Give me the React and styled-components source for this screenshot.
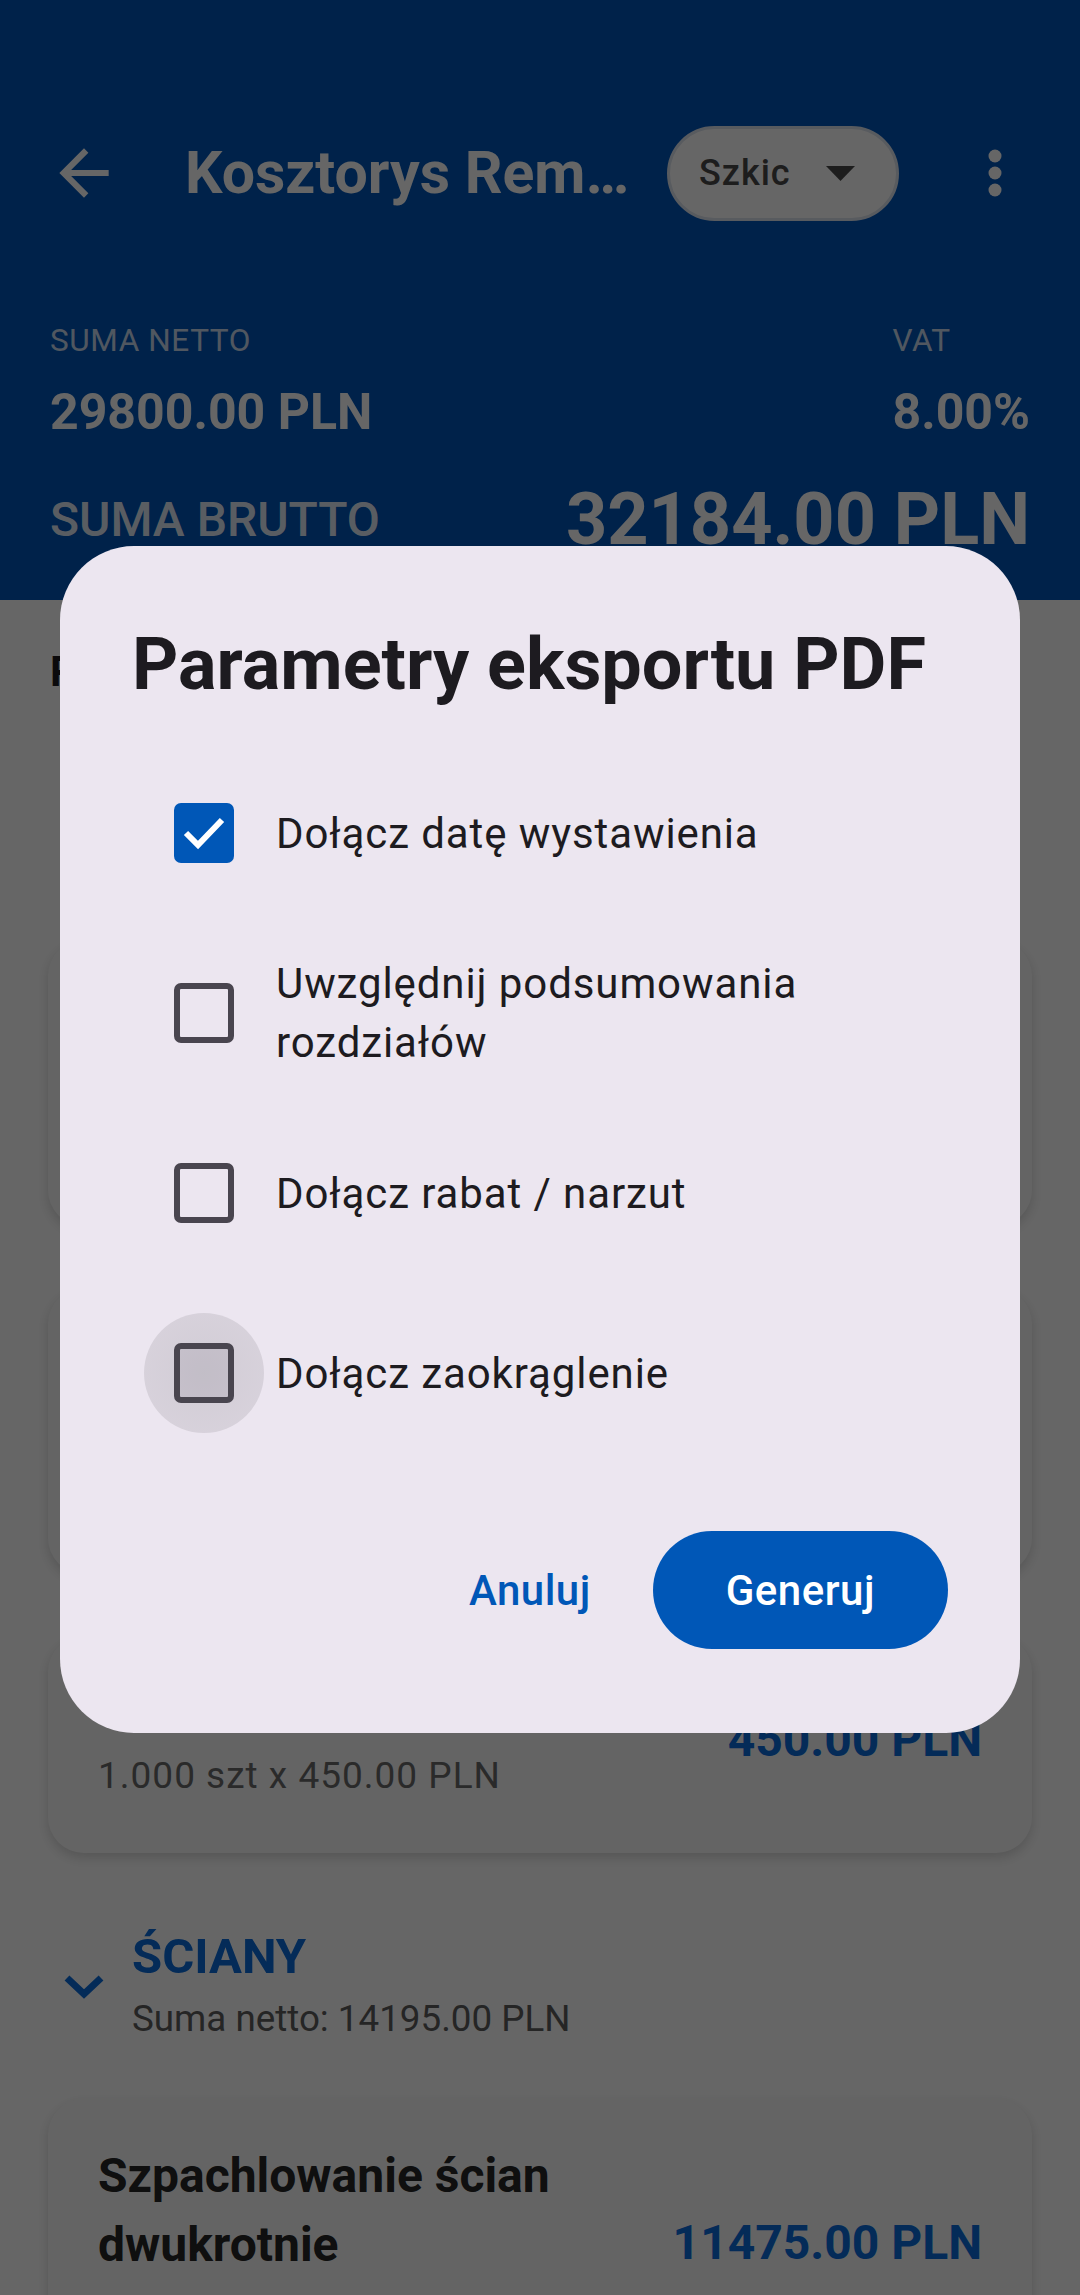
import React from "react";
import styled, { createGlobalStyle } from "styled-components";

const GlobalStyle = createGlobalStyle`
  html, body {
    margin: 0;
    padding: 0;
    background: #ffffff;
  }
  * {
    box-sizing: border-box;
  }
  body {
    font-family: Roboto, "Liberation Sans", Arial, sans-serif;
    -webkit-font-smoothing: antialiased;
  }
`;

const Screen = styled.div`
  position: relative;
  width: 1080px;
  height: 2295px;
  overflow: hidden;
  background: #ffffff;
`;

/* ---------- header ---------- */

const Header = styled.header`
  background: #0055b9;
  color: #ffffff;
  padding: 110px 0 37px;
`;

const Toolbar = styled.div`
  display: flex;
  align-items: center;
  height: 126px;
  padding: 0 78px 0 47px;
`;

const IconSlot = styled.div`
  display: flex;
  align-items: center;
  justify-content: center;
  flex-shrink: 0;
  width: ${(p) => p.$w}px;
  margin-left: ${(p) => p.$ml || 0}px;
`;

const Title = styled.h1`
  flex: 1;
  min-width: 0;
  margin: 0 0 0 64px;
  font-size: 59px;
  line-height: 70px;
  font-weight: 700;
  white-space: nowrap;
  overflow: hidden;
  text-overflow: ellipsis;
`;

const StatusChip = styled.button`
  display: flex;
  align-items: center;
  gap: 35px;
  width: 232px;
  height: 95px;
  margin-left: 37px;
  padding: 0 0 0 29px;
  border: 3px solid #dce3ee;
  border-radius: 48px;
  background: #ffffff;
  color: #4a4a4a;
  font-family: inherit;
  font-size: 36px;
  font-weight: 500;
  letter-spacing: 1px;
`;

const Summary = styled.div`
  display: flex;
  flex-direction: column;
  margin-top: 84px;
  padding: 0 50px;
`;

const SummaryRow = styled.div`
  display: flex;
  justify-content: space-between;
  align-items: ${(p) => p.$align || "flex-start"};
  margin-top: ${(p) => p.$mt || 0}px;
`;

const Stat = styled.div`
  display: flex;
  flex-direction: column;
  gap: 21px;
`;

const StatLabel = styled.span`
  font-size: 31.5px;
  line-height: 42px;
  color: rgba(255, 255, 255, 0.8);
  letter-spacing: 0.6px;
`;

const StatValue = styled.span`
  font-size: 50px;
  line-height: 58px;
  font-weight: 700;
`;

const GrossLabel = styled.span`
  font-size: 48px;
  line-height: 56px;
  font-weight: 500;
  color: rgba(255, 255, 255, 0.9);
`;

const GrossValue = styled.span`
  font-size: 72px;
  line-height: 86px;
  font-weight: 700;
`;

/* ---------- list under the header ---------- */

const Body = styled.main`
  padding: 0 48px;
  color: #1d1b20;
`;

const SectionTitle = styled.h2`
  margin: 44px 0 0;
  font-size: 42px;
  line-height: 56px;
  font-weight: 700;
  padding-left: 2px;
`;

const AddButton = styled.button`
  display: block;
  height: 120px;
  margin: 60px auto;
  padding: 0 60px;
  border: none;
  border-radius: 60px;
  background: #d8e2ff;
  color: #0a6cdc;
  font-family: inherit;
  font-size: 40px;
  font-weight: 500;
`;

const ItemList = styled.div`
  display: flex;
  flex-direction: column;
  gap: 62px;
`;

const ItemCard = styled.div`
  display: flex;
  align-items: center;
  gap: 24px;
  padding: ${(p) => p.$pt ?? 42}px 50px ${(p) => p.$pb ?? 42}px;
  background: #fbfbfb;
  border-radius: 36px;
  box-shadow: 0 5px 12px rgba(0, 0, 0, 0.16);
`;

const ItemInfo = styled.div`
  flex: 1;
  min-width: 0;
  display: flex;
  flex-direction: column;
  gap: 4px;
`;

const ItemName = styled.span`
  font-size: 48px;
  line-height: 69px;
  font-weight: 700;
  color: #262626;
`;

const ItemDetail = styled.span`
  font-size: 37px;
  line-height: 60px;
  letter-spacing: 1px;
  color: #6a6a6a;
`;

const ItemPrice = styled.span`
  flex-shrink: 0;
  font-size: 48px;
  font-weight: 700;
  color: #0a6cdc;
`;

const Chapter = styled.div`
  display: flex;
  align-items: center;
  gap: 17px;
  margin-top: 42px;
  padding: 34px 0 55px 4px;
`;

const ChapterText = styled.div`
  display: flex;
  flex-direction: column;
  gap: 9px;
`;

const ChapterName = styled.span`
  font-size: 49px;
  line-height: 56px;
  font-weight: 700;
  color: #0a6cdc;
`;

const ChapterSum = styled.span`
  font-size: 36.75px;
  line-height: 50px;
  color: #5e5e5e;
`;

/* ---------- export dialog ---------- */

const Scrim = styled.div`
  position: fixed;
  inset: 0;
  display: flex;
  justify-content: center;
  align-items: flex-start;
  padding-top: 546px;
  background: rgba(0, 0, 0, 0.6);
`;

const Dialog = styled.div`
  width: 960px;
  padding: 76px 72px 84px;
  background: #ece6f0;
  border-radius: 74px;
  color: #1d1b20;
`;

const DialogTitle = styled.h2`
  margin: 0;
  font-size: 72px;
  line-height: 86px;
  font-weight: 700;
`;

const Options = styled.div`
  display: flex;
  flex-direction: column;
  gap: 60px;
  margin-top: 65px;
  padding-left: 12px;
`;

const OptionRow = styled.label`
  display: flex;
  align-items: center;
  min-height: 120px;
`;

const Target = styled.span`
  display: flex;
  align-items: center;
  justify-content: center;
  flex-shrink: 0;
  width: 120px;
  height: 120px;
  border-radius: 50%;
  background: ${(p) =>
    p.$focused
      ? "radial-gradient(circle, rgba(29,27,32,0.13) 0%, rgba(29,27,32,0.1) 70%, rgba(29,27,32,0.06) 100%)"
      : "transparent"};
`;

const Box = styled.span`
  display: flex;
  align-items: center;
  justify-content: center;
  width: 60px;
  height: 60px;
  border-radius: 7px;
  border: ${(p) => (p.$checked ? "none" : "6px solid #49454f")};
  background: ${(p) =>
    p.$checked ? "#0057b7" : p.$focused ? "rgba(29,27,32,0.08)" : "transparent"};
`;

const OptionLabel = styled.span`
  margin-left: 12px;
  font-size: 42px;
  line-height: 59px;
  letter-spacing: 0.9px;
`;

const Actions = styled.div`
  display: flex;
  justify-content: flex-end;
  align-items: center;
  gap: 32px;
  margin-top: 98px;
`;

const ActionButton = styled.button`
  height: 118px;
  padding: 0 ${(p) => (p.$filled ? 73 : 30)}px;
  border: none;
  border-radius: 59px;
  background: ${(p) => (p.$filled ? "#0057b7" : "transparent")};
  color: ${(p) => (p.$filled ? "#ffffff" : "#0057b7")};
  font-family: inherit;
  font-size: 42px;
  font-weight: 500;
  letter-spacing: 0.5px;
`;

/* ---------- icons ---------- */

const BackArrow = () => (
  <svg width="74" height="74" viewBox="0 0 24 24" fill="#ffffff">
    <path d="M20 11H7.83l5.59-5.59L12 4l-8 8 8 8 1.41-1.41L7.83 13H20v-2z" />
  </svg>
);

const MoreDots = () => (
  <svg width="14" height="48" viewBox="0 0 14 48" fill="#ffffff">
    <circle cx="7" cy="7" r="6.5" />
    <circle cx="7" cy="24" r="6.5" />
    <circle cx="7" cy="41" r="6.5" />
  </svg>
);

const DropTriangle = () => (
  <svg width="29" height="15" viewBox="0 0 29 15" fill="#4a4a4a">
    <polygon points="0,0 29,0 14.5,15" />
  </svg>
);

const Chevron = () => (
  <svg width="40" height="24" viewBox="0 0 40 24">
    <polyline
      points="3,3 20,19 37,3"
      fill="none"
      stroke="#0a6cdc"
      strokeWidth="7"
      strokeLinejoin="miter"
    />
  </svg>
);

const Check = () => (
  <svg width="60" height="60" viewBox="0 0 60 60">
    <polyline
      points="12,30 24,42 48,17"
      fill="none"
      stroke="#ffffff"
      strokeWidth="6"
    />
  </svg>
);

const items = [
  { name: "Skucie starych płytek ściennych", detail: "12.000 m² x 85.00 PLN", price: "1020.00 PLN" },
  { name: "Montaż drzwi wewnętrznych", detail: "2.000 szt x 650.00 PLN", price: "1300.00 PLN" },
  { name: "Montaż baterii", detail: "1.000 szt x 450.00 PLN", price: "450.00 PLN", pt: 37, pb: 47 },
];

const options = [
  { label: "Dołącz datę wystawienia", checked: true },
  { label: "Uwzględnij podsumowania rozdziałów" },
  { label: "Dołącz rabat / narzut" },
  { label: "Dołącz zaokrąglenie", focused: true },
];

const Item = ({ name, detail, price, pt, pb }) => (
  <ItemCard $pt={pt} $pb={pb}>
    <ItemInfo>
      <ItemName>{name}</ItemName>
      <ItemDetail>{detail}</ItemDetail>
    </ItemInfo>
    <ItemPrice>{price}</ItemPrice>
  </ItemCard>
);

export default function App() {
  return (
    <>
      <GlobalStyle />
      <Screen>
        <Header>
          <Toolbar>
            <IconSlot $w={74}>
              <BackArrow />
            </IconSlot>
            <Title>Kosztorys Remontu Mieszkania</Title>
            <StatusChip>
              <span>Szkic</span>
              <DropTriangle />
            </StatusChip>
            <IconSlot $w={14} $ml={89}>
              <MoreDots />
            </IconSlot>
          </Toolbar>
          <Summary>
            <SummaryRow>
              <Stat>
                <StatLabel>SUMA NETTO</StatLabel>
                <StatValue>29800.00 PLN</StatValue>
              </Stat>
              <Stat>
                <StatLabel>VAT</StatLabel>
                <StatValue>8.00%</StatValue>
              </Stat>
            </SummaryRow>
            <SummaryRow $align="center" $mt={36}>
              <GrossLabel>SUMA BRUTTO</GrossLabel>
              <GrossValue>32184.00 PLN</GrossValue>
            </SummaryRow>
          </Summary>
        </Header>

        <Body>
          <SectionTitle>Pozycje kosztorysu</SectionTitle>
          <AddButton>+ Dodaj rozdział</AddButton>
          <ItemList>
            {items.map((item, idx) => (
              <Item key={idx} {...item} />
            ))}
          </ItemList>
          <Chapter>
            <IconSlot $w={63}>
              <Chevron />
            </IconSlot>
            <ChapterText>
              <ChapterName>ŚCIANY</ChapterName>
              <ChapterSum>Suma netto: 14195.00 PLN</ChapterSum>
            </ChapterText>
          </Chapter>
          <Item
            name="Szpachlowanie ścian dwukrotnie"
            detail="45.000 m² x 255.00 PLN"
            price="11475.00 PLN"
          />
        </Body>

        <Scrim>
          <Dialog>
            <DialogTitle>Parametry eksportu PDF</DialogTitle>
            <Options>
              {options.map((opt, idx) => (
                <OptionRow key={idx}>
                  <Target $focused={opt.focused}>
                    <Box $checked={opt.checked} $focused={opt.focused}>
                      {opt.checked && <Check />}
                    </Box>
                  </Target>
                  <OptionLabel>{opt.label}</OptionLabel>
                </OptionRow>
              ))}
            </Options>
            <Actions>
              <ActionButton>Anuluj</ActionButton>
              <ActionButton $filled>Generuj</ActionButton>
            </Actions>
          </Dialog>
        </Scrim>
      </Screen>
    </>
  );
}
